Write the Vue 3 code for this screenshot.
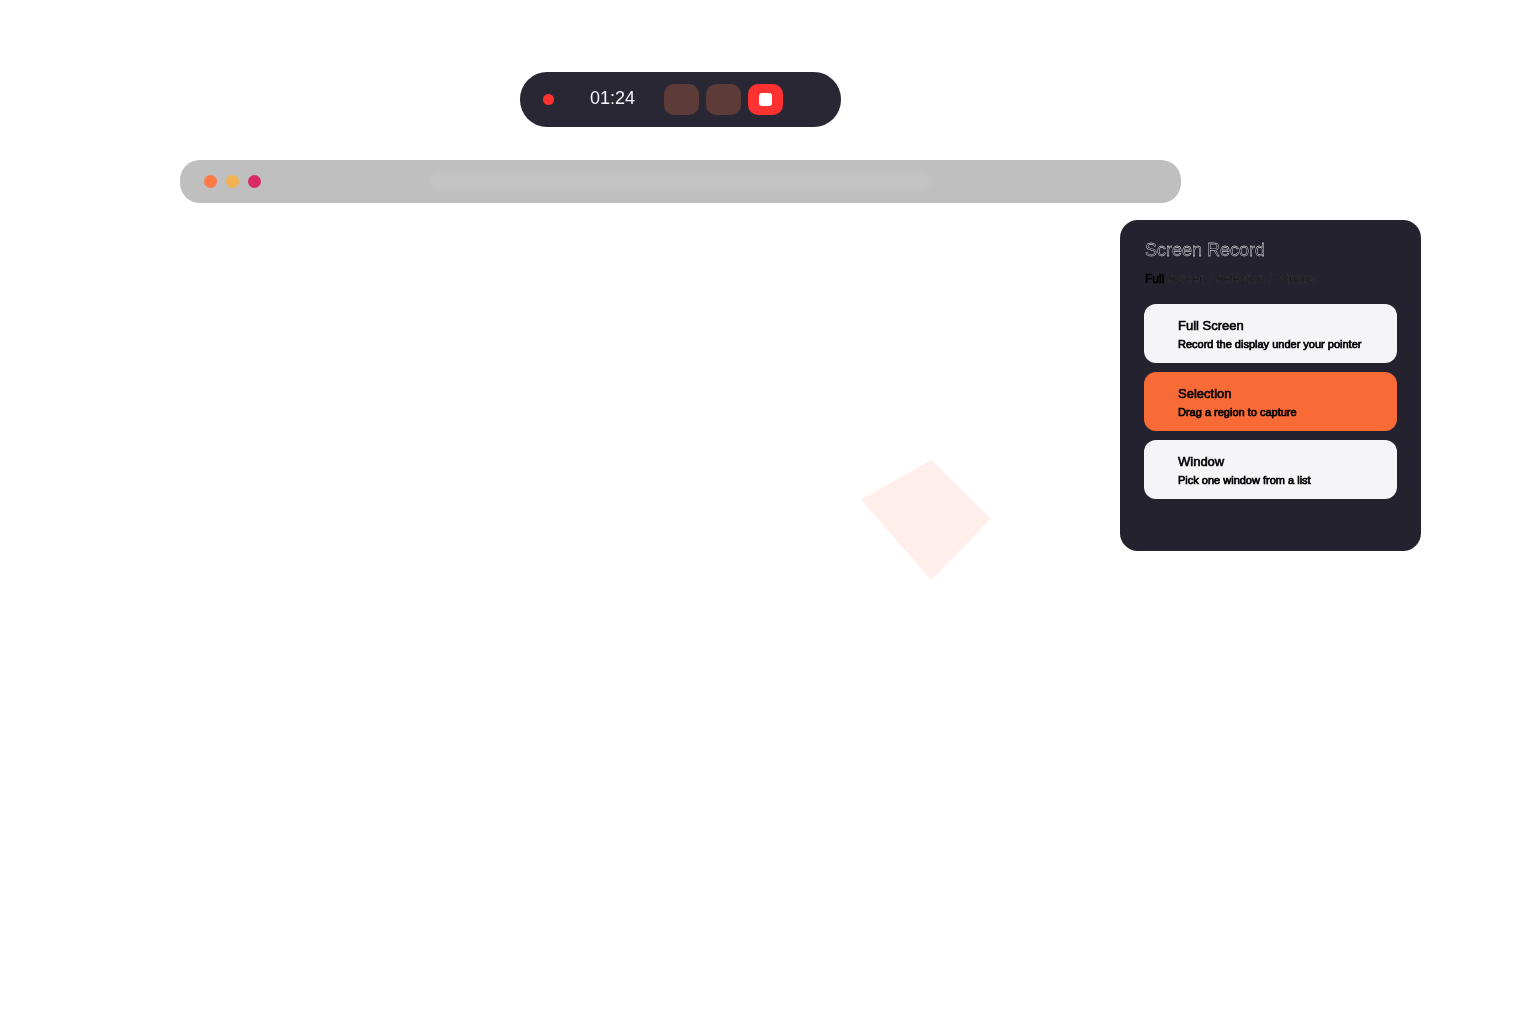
<script setup>
const modes = [
  { name: 'Full Screen', hint: 'Record the display under your pointer', active: false },
  { name: 'Selection', hint: 'Drag a region to capture', active: true },
  { name: 'Window', hint: 'Pick one window from a list', active: false },
]
</script>

<template>
  <div class="page">
    <div class="diamond"></div>
    <div class="recorder">
      <span class="rec-dot"></span>
      <span class="time">01:24</span>
      <span class="btn"></span>
      <span class="btn"></span>
      <span class="btn stop"><span class="stop-mark"></span></span>
    </div>
    <div class="browser">
      <span class="dot orange"></span>
      <span class="dot yellow"></span>
      <span class="dot pink"></span>
      <span class="address"></span>
    </div>
    <div class="panel">
      <div class="title">Screen Record</div>
      <div class="subtitle"><span class="lead">Full</span> Screen / Selection / Window</div>
      <div class="modes">
        <div v-for="m in modes" :key="m.name" class="mode" :class="{ active: m.active }">
          <div class="mode-name">{{ m.name }}</div>
          <div class="mode-hint">{{ m.hint }}</div>
        </div>
      </div>
    </div>
  </div>
</template>

<style>
body { background: #fff; }
</style>

<style scoped>
.page {
  position: relative;
  width: 1536px;
  height: 1024px;
  box-sizing: border-box;
  padding-top: 72px;
  overflow: hidden;
  background: #fff;
  font-family: "Liberation Sans", Arial, sans-serif;
  display: flex;
  flex-direction: column;
}
.diamond {
  position: absolute;
  left: 861px;
  top: 460px;
  width: 130px;
  height: 120px;
  background: #ffeee9;
  clip-path: polygon(54% 0, 100% 49%, 54% 100%, 0 33%);
}
.recorder {
  margin-left: 520px;
  width: 321px;
  height: 55px;
  box-sizing: border-box;
  padding-left: 23px;
  border-radius: 27px;
  background: #2a2735;
  display: flex;
  align-items: center;
}
.rec-dot {
  width: 11px;
  height: 11px;
  margin-top: -1px;
  border-radius: 50%;
  background: #ff3131;
  margin-right: 36px;
}
.time {
  width: 45px;
  margin-right: 29px;
  margin-top: -3px;
  color: #f4f4f8;
  font-size: 18px;
  line-height: 22px;
  will-change: transform;
}
.btn {
  width: 35px;
  height: 31px;
  margin-right: 7px;
  border-radius: 10px;
  background: #5d3b38;
  display: flex;
  align-items: center;
  justify-content: center;
}
.stop { background: #ff3131; }
.stop-mark {
  width: 13px;
  height: 13px;
  border-radius: 3px;
  background: #fff;
}
.browser {
  margin-top: 33px;
  margin-left: 180px;
  width: 1001px;
  height: 43px;
  box-sizing: border-box;
  padding-left: 24px;
  border-radius: 20px;
  background: #bfbfbf;
  display: flex;
  align-items: center;
  gap: 9px;
}
.dot {
  width: 13px;
  height: 13px;
  border-radius: 50%;
}
.orange { background: #ff7a45; }
.yellow { background: #f2b24f; }
.pink { background: #d92a68; }
.address {
  width: 501px;
  height: 19px;
  margin-left: 160px;
  border-radius: 10px;
  background: #c4c4c4;
  filter: blur(2px);
}
.panel {
  margin-top: 17px;
  margin-left: 1120px;
  width: 301px;
  height: 331px;
  box-sizing: border-box;
  padding: 19px 24px 0 24.5px;
  border-radius: 18px;
  background: #25222f;
}
.title {
  font-size: 18px;
  line-height: 22px;
  color: #25222f;
  -webkit-text-stroke: 0.35px #ffffff;
  will-change: transform;
}
.subtitle {
  margin-top: 11px;
  font-size: 12px;
  line-height: 15px;
  color: #000;
  -webkit-text-stroke: 0.5px #3a3841;
  will-change: transform;
}
.lead {
  -webkit-text-stroke: 0.6px #000;
}
.modes {
  margin-top: 17px;
  margin-left: -0.5px;
  display: flex;
  flex-direction: column;
  gap: 9px;
}
.mode {
  height: 59px;
  box-sizing: border-box;
  padding: 13px 0 0 34px;
  border-radius: 12px;
  background: #f5f5f9;
  color: #000;
}
.mode.active { background: #f96b36; }
.mode-name {
  font-size: 13px;
  line-height: 17px;
  -webkit-text-stroke: 0.6px #000;
  will-change: transform;
}
.mode-hint {
  margin-top: 3px;
  font-size: 11px;
  line-height: 14px;
  -webkit-text-stroke: 0.7px #000;
  will-change: transform;
}
</style>
